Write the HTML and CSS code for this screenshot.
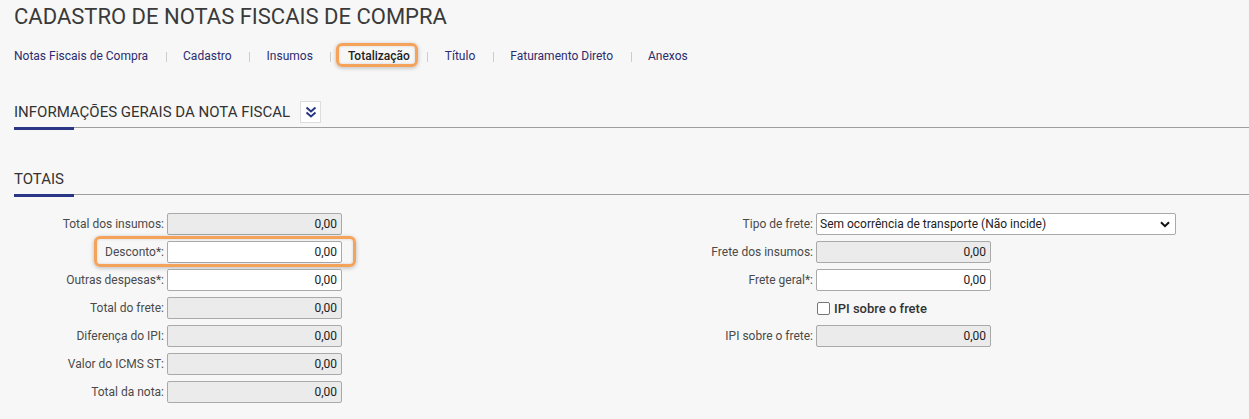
FILE: index.html
```html
<!DOCTYPE html>
<html lang="pt-BR">
<head>
    <meta charset="UTF-8">
    <title>Cadastro de Notas Fiscais de Compra</title>
    <link rel="stylesheet" href="styles.css">
</head>
<body>
    <div class="page">
        <h1 class="page-title">CADASTRO DE NOTAS FISCAIS DE COMPRA</h1>

        <ul class="tabs">
            <li><a href="#">Notas Fiscais de Compra</a></li>
            <li><a href="#">Cadastro</a></li>
            <li><a href="#">Insumos</a></li>
            <li class="active"><a href="#">Totalização</a></li>
            <li><a href="#">Título</a></li>
            <li><a href="#">Faturamento Direto</a></li>
            <li><a href="#">Anexos</a></li>
        </ul>

        <div class="section-head first">
            <h2>INFORMAÇÕES GERAIS DA NOTA FISCAL</h2>
            <button class="toggle" type="button" title="Expandir">
                <svg width="12" height="12" viewBox="0 0 12 12">
                    <path d="M1.5 1.5 L6 5.5 L10.5 1.5" fill="none" stroke="#2a3585" stroke-width="2"/>
                    <path d="M1.5 6.5 L6 10.5 L10.5 6.5" fill="none" stroke="#2a3585" stroke-width="2"/>
                </svg>
            </button>
        </div>

        <div class="section-head">
            <h2>TOTAIS</h2>
        </div>

        <div class="totals">
            <div class="col col-left">
                <div class="row">
                    <label>Total dos insumos:</label>
                    <input type="text" value="0,00" disabled>
                </div>
                <div class="row highlight">
                    <label>Desconto*:</label>
                    <input type="text" value="0,00">
                </div>
                <div class="row">
                    <label>Outras despesas*:</label>
                    <input type="text" value="0,00">
                </div>
                <div class="row">
                    <label>Total do frete:</label>
                    <input type="text" value="0,00" disabled>
                </div>
                <div class="row">
                    <label>Diferença do IPI:</label>
                    <input type="text" value="0,00" disabled>
                </div>
                <div class="row">
                    <label>Valor do ICMS ST:</label>
                    <input type="text" value="0,00" disabled>
                </div>
                <div class="row">
                    <label>Total da nota:</label>
                    <input type="text" value="0,00" disabled>
                </div>
            </div>

            <div class="col col-right">
                <div class="row">
                    <label>Tipo de frete:</label>
                    <div class="select-wrap">
                        <select>
                            <option>Sem ocorrência de transporte (Não incide)</option>
                        </select>
                        <svg class="select-arrow" width="10" height="7" viewBox="0 0 10 7">
                            <path d="M1 1.2 L5 5.2 L9 1.2" fill="none" stroke="#111" stroke-width="2"/>
                        </svg>
                    </div>
                </div>
                <div class="row">
                    <label>Frete dos insumos:</label>
                    <input type="text" value="0,00" disabled>
                </div>
                <div class="row">
                    <label>Frete geral*:</label>
                    <input type="text" value="0,00">
                </div>
                <div class="row">
                    <label></label>
                    <span class="check">
                        <span class="box"></span>
                        IPI sobre o frete
                    </span>
                </div>
                <div class="row">
                    <label>IPI sobre o frete:</label>
                    <input type="text" value="0,00" disabled>
                </div>
            </div>
        </div>
    </div>
</body>
</html>
```

FILE: styles.css
```css
body {
    margin: 0;
    padding: 0;
    background-color: #f7f7f7;
    font-family: Roboto, "Liberation Sans", Arial, sans-serif;
    color: #333;
}
.page {
    padding: 0 0 0 14px;
}
.page-title {
    margin: 4px 0 0;
    font-size: 22px;
    line-height: 26px;
    font-weight: 400;
    color: #3a3a3a;
}

/* tabs */
.tabs {
    list-style: none;
    margin: 16px 0 0;
    padding: 0;
    display: flex;
    font-size: 12px;
    line-height: 20px;
}
.tabs li {
    position: relative;
    padding: 0 17.5px;
}
.tabs li:first-child {
    padding-left: 0;
}
.tabs li + li::before {
    content: "";
    position: absolute;
    left: 0;
    top: 6px;
    width: 1px;
    height: 10px;
    background-color: #ccc;
}
.tabs a {
    position: relative;
    color: #2c2c6e;
    text-decoration: none;
}
.tabs .active a {
    color: #222;
    font-weight: 500;
}
.tabs .active a::after {
    content: "";
    position: absolute;
    left: -12px;
    right: -8px;
    top: -6px;
    bottom: -4px;
    border: 3px solid #f5a25b;
    border-radius: 6px;
    box-shadow: 0 1px 4px rgba(0, 0, 0, 0.25), inset 0 0 3px rgba(0, 0, 0, 0.15);
}

/* section headers */
.section-head {
    position: relative;
    display: flex;
    align-items: center;
    height: 31px;
    margin-top: 35px;
    border-bottom: 1px solid #9e9e9e;
}
.section-head.first {
    margin-top: 30px;
}
.section-head::after {
    content: "";
    position: absolute;
    left: 0;
    bottom: -3px;
    width: 60px;
    height: 3px;
    background-color: #2a3585;
}
.section-head h2 {
    margin: 0;
    font-size: 15px;
    font-weight: 400;
    color: #333;
}
.toggle {
    margin-left: 10px;
    width: 21px;
    height: 22px;
    padding: 0;
    display: flex;
    align-items: center;
    justify-content: center;
    background-color: #fff;
    border: 1px solid #ddd;
    cursor: pointer;
}

/* totals form */
.totals {
    display: flex;
    margin-top: 18px;
}
.col {
    display: flex;
    flex-direction: column;
    gap: 6px;
}
.col-left {
    width: 649px;
}
.row {
    position: relative;
    display: flex;
    align-items: center;
    gap: 3px;
    height: 22px;
    font-size: 12px;
}
.row label {
    width: 150px;
    text-align: right;
    color: #4a4a4a;
}
.row input {
    box-sizing: border-box;
    width: 175px;
    height: 22px;
    padding: 0 4px;
    text-align: right;
    font-family: inherit;
    font-size: 12px;
    color: #222;
    background-color: #fff;
    border: 1px solid #a9a9a9;
    border-radius: 2px;
}
.row input:disabled {
    background-color: #ebebeb;
    color: #222;
}
.col-left .row {
    width: 328px;
}
.row.highlight::after {
    content: "";
    position: absolute;
    left: 80px;
    right: -14px;
    top: -5px;
    bottom: -4px;
    border: 3px solid #f5a25b;
    border-radius: 6px;
    box-shadow: 0 1px 4px rgba(0, 0, 0, 0.25), inset 0 0 3px rgba(0, 0, 0, 0.15);
}
.select-wrap {
    position: relative;
}
.select-wrap select {
    box-sizing: border-box;
    width: 360px;
    height: 22px;
    padding: 0 3px;
    font-family: inherit;
    font-size: 12px;
    color: #222;
    background-color: #fff;
    border: 1px solid #a9a9a9;
    border-radius: 2px;
    appearance: none;
    -webkit-appearance: none;
}
.select-arrow {
    position: absolute;
    right: 6px;
    top: 8px;
}
.check {
    display: flex;
    align-items: center;
    gap: 4px;
    font-weight: 500;
    color: #333;
    font-size: 13px;
    margin-left: 1px;
}
.check .box {
    box-sizing: border-box;
    width: 13px;
    height: 13px;
    background-color: #fff;
    border: 1px solid #767676;
    border-radius: 2px;
}
```
